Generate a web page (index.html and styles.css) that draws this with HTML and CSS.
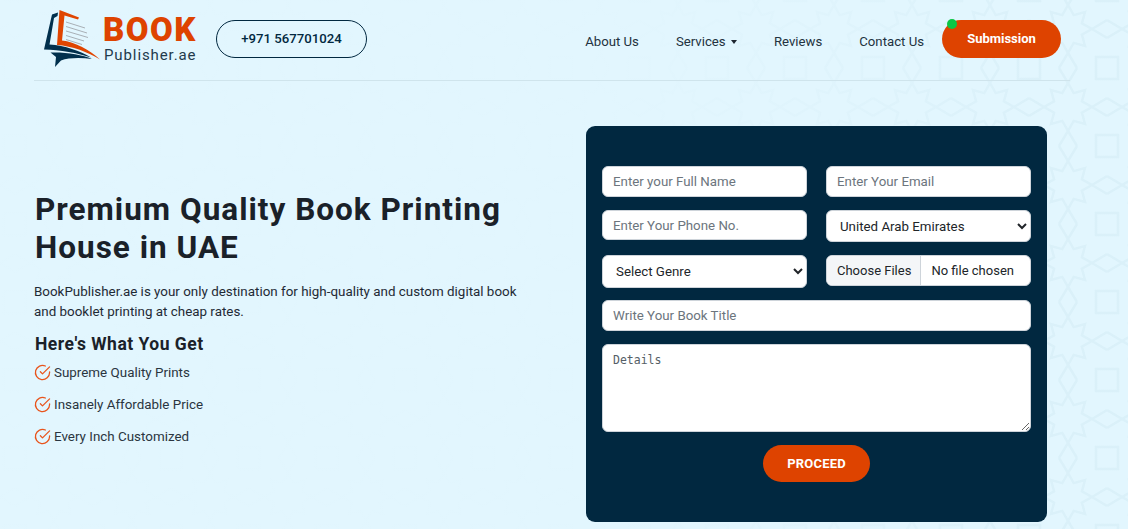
FILE: index.html
```html
<!DOCTYPE html>
<html lang="en">
<head>
<meta charset="utf-8">
<title>BookPublisher.ae</title>
<link rel="stylesheet" href="styles.css">
</head>
<body>
<header class="header">
  <a class="logo" href="#">
    <svg class="logo-mark" viewBox="40 8 64 62" width="64" height="62" aria-hidden="true">
      <path fill="#e04500" d="M59.500 10 L79 17.500 L78 19.500 L64.500 15.500 L62 40.500 C75 42 90 50 100 59.500 C88 52 72 46 57 45 Z"/>
      <path fill="#01304d" d="M52 14.500 L58 12.500 L57.500 16 L54 18 L49.500 44.500 C65 45.500 80 51 91 57.500 C78 53 60 50 44 49.500 Z"/>
      <path fill="#01304d" d="M50.500 52.500 C66 52 82 54.500 92 59 C81 57.500 69 57.500 61 60.500 L55 67 L56 57 Z"/>
      <g stroke="#a9b0b6" stroke-width="1" fill="none">
        <path d="M66 22 L85 28"/><path d="M66 26.500 L87 33"/><path d="M66 31 L88 37.500"/><path d="M66 35.500 L84 41"/><path d="M66 39.500 L82 44.500"/>
      </g>
    </svg>
    <span class="logo-text">
      <span class="logo-book">BOOK</span>
      <span class="logo-sub">Publisher.ae</span>
    </span>
  </a>
  <a class="phone" href="#">+971 567701024</a>
  <nav class="nav">
    <a href="#">About Us</a>
    <a href="#" class="has-caret">Services <span class="caret"></span></a>
    <a href="#">Reviews</a>
    <a href="#">Contact Us</a>
  </nav>
  <a class="submission" href="#"><span class="dot"></span>Submission</a>
</header>

<main class="hero">
  <section class="intro">
    <h1>Premium Quality Book Printing House in UAE</h1>
    <p>BookPublisher.ae is your only destination for high-quality and custom digital book and booklet printing at cheap rates.</p>
    <h2>Here's What You Get</h2>
    <ul class="perks">
      <li><svg viewBox="0 0 24 24" class="check" aria-hidden="true"><path d="M22 11.080V12a10 10 0 1 1-5.930-9.140"/><path d="M22 4 12 14.010 9 11.010"/></svg>Supreme Quality Prints</li>
      <li><svg viewBox="0 0 24 24" class="check" aria-hidden="true"><path d="M22 11.080V12a10 10 0 1 1-5.930-9.140"/><path d="M22 4 12 14.010 9 11.010"/></svg>Insanely Affordable Price</li>
      <li><svg viewBox="0 0 24 24" class="check" aria-hidden="true"><path d="M22 11.080V12a10 10 0 1 1-5.930-9.140"/><path d="M22 4 12 14.010 9 11.010"/></svg>Every Inch Customized</li>
    </ul>
  </section>
  <form class="card">
    <input class="field h31" type="text" placeholder="Enter your Full Name">
    <input class="field h31" type="email" placeholder="Enter Your Email">
    <input class="field h30" type="tel" placeholder="Enter Your Phone No.">
    <select class="field pick h32"><option>United Arab Emirates</option></select>
    <select class="field pick h33"><option>Select Genre</option></select>
    <input class="field file" type="file" multiple>
    <input class="field wide h31 nudge" type="text" placeholder="Write Your Book Title">
    <textarea class="field wide details" placeholder="Details"></textarea>
    <button class="proceed" type="button">PROCEED</button>
  </form>
</main>
</body>
</html>
```
FILE: styles.css
```css
* { box-sizing: border-box; }
html, body { height: 100%; }
body {
  margin: 0;
  height: 529px;
  overflow: hidden;
  font-family: "Roboto", "Liberation Sans", sans-serif;
  color: #1d2630;
  background-color: #e2f6fe;
  background-image:
    linear-gradient(90deg, rgba(226,246,254,0.96) 55%, rgba(226,246,254,0.6) 78%, rgba(226,246,254,0.2) 92%),
    url("data:image/svg+xml,%3Csvg xmlns='http://www.w3.org/2000/svg' width='78' height='78' viewBox='0 0 78 78'%3E%3Cg fill='none' stroke='%23d8eff8' stroke-width='2.5'%3E%3Cpath d='M63 39 L52.900 44.700 L56 56 L44.700 52.900 L39 63 L33.300 52.900 L22 56 L25.100 44.700 L15 39 L25.100 33.300 L22 22 L33.300 25.100 L39 15 L44.700 25.100 L56 22 L52.900 33.300 Z'/%3E%3Cpath d='M39 63 L48 78 M39 63 L30 78 M48 0 L39 15 L30 0 M63 39 L78 48 M63 39 L78 30 M0 48 L15 39 L0 30'/%3E%3Cpath d='M11 0 V11 H0 M67 0 V11 H78 M11 78 V67 H0 M67 78 V67 H78'/%3E%3C/g%3E%3C/svg%3E");
  background-position: 0 0, 1029px 68px;
}
a { color: inherit; text-decoration: none; }

.header {
  display: flex;
  align-items: flex-start;
  width: 1036px;
  height: 81px;
  margin-left: 34px;
  border-bottom: 1px solid #cfe4ec;
  position: relative;
}
.logo { display: flex; margin: 8px 0 0 6px; width: 176px; }
.logo-mark { flex: none; }
.logo-text { display: flex; flex-direction: column; margin-left: -1px; }
.logo-book { font-size: 33px; line-height: 34px; margin-top: 5px; font-weight: 900; color: #de4300; letter-spacing: 1.5px; }
.logo-sub { font-size: 15px; line-height: 16px; margin-left: 1px; color: #233a4c; letter-spacing: 0.9px; }
.phone {
  width: 151px; height: 38px; margin-top: 20px; padding-bottom: 1px;
  display: flex; align-items: center; justify-content: center;
  border: 1px solid #012840; border-radius: 19px;
  font-size: 13.200px; font-weight: 500; color: #012840;
}
.nav { display: flex; gap: 37px; margin: 33px 0 0 auto; font-size: 13.200px; line-height: 18px; color: #233240; }
.caret {
  display: inline-block; width: 0; height: 0; margin-left: 2px; vertical-align: 2px;
  border-top: 4px solid #1d2630; border-left: 3.500px solid transparent; border-right: 3.500px solid transparent;
}
.submission {
  position: relative;
  width: 119px; height: 38px; margin: 20px 9px 0 18px;
  display: flex; align-items: center; justify-content: center; padding-bottom: 2px;
  background: #de4300; color: #fff; border-radius: 19px;
  font-size: 13px; font-weight: 700;
}
.dot { position: absolute; left: 5px; top: -1px; width: 10px; height: 10px; border-radius: 50%; background: #0bc645; }

.hero { display: flex; padding: 45px 0 0 35px; }
.intro { width: 551px; padding-top: 65px; }
h1 { margin: 0; width: 510px; font-size: 31.500px; line-height: 38px; font-weight: 700; letter-spacing: 1px; color: #1a2129; }
p { margin: 15px 0 0 -1px; width: 500px; font-size: 13.400px; line-height: 20px; color: #1f2a35; }
h2 { margin: 11px 0 0; font-size: 17.500px; line-height: 22px; font-weight: 700; letter-spacing: 0.5px; color: #1a2129; }
.perks { list-style: none; margin: 7px 0 0 -1px; padding: 0; display: flex; flex-direction: column; gap: 12px; }
.perks li { display: flex; align-items: center; gap: 3px; height: 20px; font-size: 13.400px; color: #2a3540; }
.check { width: 17px; height: 17px; fill: none; stroke: #e8541c; stroke-width: 1.800; stroke-linecap: round; stroke-linejoin: round; }

.card {
  width: 461px; height: 396px; padding: 40px 16px 0;
  background: #012840; border-radius: 9px;
  display: grid; grid-template-columns: 205px 205px; column-gap: 19px; row-gap: 13px;
  align-content: start; align-items: start;
}
.field {
  width: 100%;
  border: 1px solid #ced4da; border-radius: 6px; background: #fff;
  font-family: inherit; font-size: 13.300px; color: #212529; padding: 0 10px; margin: 0;
  outline: none;
}
.field::placeholder { color: #6c757d; opacity: 1; }
.h30 { height: 30px; }
.h31 { height: 31px; }
.h32 { height: 32px; }
.h33 { height: 33px; margin-bottom: -1px; padding-bottom: 1px; }
.pick { padding-left: 9px; padding-right: 0; }
.nudge { padding-bottom: 1px; }
.file { height: 31px; padding: 0; overflow: hidden; line-height: 29px; font-size: 13px; }
.file::file-selector-button {
  height: 31px; margin: -1px 10px 0 0; padding: 0 9px 0 10px;
  border: 0; border-right: 1px solid #ced4da; background: #f4f6f8;
  font: inherit; color: #212529;
}
.wide { grid-column: 1 / -1; }
.details { height: 88px; padding: 7px 10px; font-family: "DejaVu Sans Mono", "Liberation Mono", monospace; font-size: 11.500px; line-height: 16px; display: block; }
.details::placeholder { color: #555e66; }
.proceed {
  grid-column: 1 / -1; justify-self: center;
  width: 107px; height: 37px; padding: 0 0 1px; border: 0; border-radius: 19px;
  background: #de4300; color: #fff;
  font-family: inherit; font-size: 13px; font-weight: 700; letter-spacing: 0.2px;
}
```
